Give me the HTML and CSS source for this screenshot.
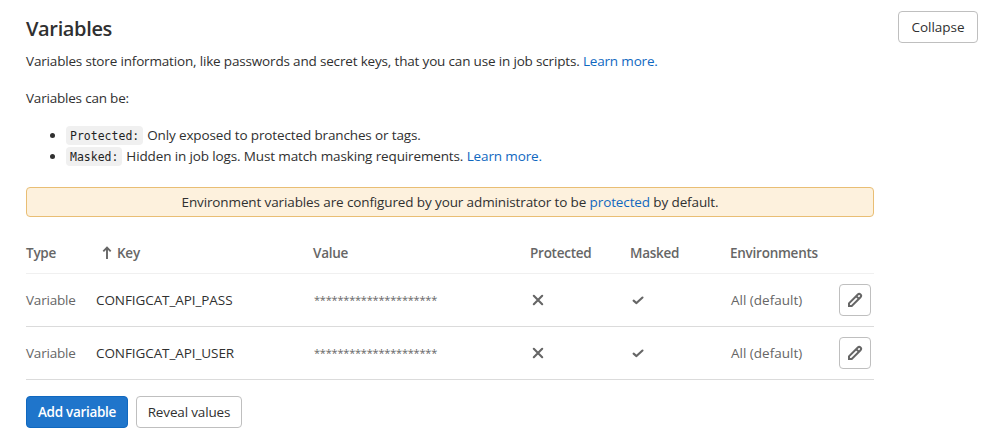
FILE: index.html
```html
<!DOCTYPE html>
<html lang="en">
<head>
<meta charset="utf-8">
<title>Variables</title>
<link rel="stylesheet" href="styles.css">
</head>
<body>
<svg class="sprite" aria-hidden="true">
  <symbol id="close" viewBox="0 0 16 16"><path d="M3.8 3.8l8.4 8.4M12.2 3.8l-8.4 8.4" fill="none" stroke="currentColor" stroke-width="2.1" stroke-linecap="round"/></symbol>
  <symbol id="check" viewBox="0 0 16 16"><path d="M3.6 8.6l2.9 2.5 6-5.6" fill="none" stroke="currentColor" stroke-width="2.1" stroke-linecap="round" stroke-linejoin="round"/></symbol>
  <symbol id="pencil" viewBox="0 0 16 16"><path d="M2 14v-2.7L10.8 2.5a1.9 1.9 0 0 1 2.7 2.7L4.7 14zM9.2 4.1l2.7 2.7" fill="none" stroke="currentColor" stroke-width="2"/><path d="M1 11.3L4.7 15H1z" fill="currentColor"/></symbol>
</svg>
<section class="settings">
  <div class="content">
    <h4 class="title">Variables</h4>
    <p class="intro">Variables store information, like passwords and secret keys, that you can use in job scripts. <a class="link">Learn more.</a></p>
    <p class="can-be">Variables can be:</p>
    <ul class="kinds">
      <li><code class="code">Protected:</code> <span class="kind-protected">Only exposed to protected branches or tags.</span></li>
      <li><code class="code">Masked:</code> <span class="kind-masked">Hidden in job logs. Must match masking requirements. <a class="link">Learn more.</a></span></li>
    </ul>
    <div class="alert"><span>Environment variables are configured by your administrator to be <a class="link">protected</a> by default.</span></div>
    <div class="table">
      <div class="row head">
        <span>Type</span>
        <span class="sorted"><svg class="arrow" viewBox="0 0 10 14"><path d="M5 13V2M1.3 5.4L5 1.7l3.7 3.7" fill="none" stroke="currentColor" stroke-width="1.9"/></svg>Key</span>
        <span>Value</span><span>Protected</span><span>Masked</span><span>Environments</span><span></span>
      </div>
      <div class="row">
        <span class="type">Variable</span><span class="key">CONFIGCAT_API_PASS</span><span class="mask">*********************</span>
        <svg class="icon"><use href="#close"/></svg><svg class="icon"><use href="#check"/></svg>
        <span class="env">All (default)</span><button class="btn edit" aria-label="Edit"><svg class="pencil"><use href="#pencil"/></svg></button>
      </div>
      <div class="row">
        <span class="type">Variable</span><span class="key">CONFIGCAT_API_USER</span><span class="mask">*********************</span>
        <svg class="icon"><use href="#close"/></svg><svg class="icon"><use href="#check"/></svg>
        <span class="env">All (default)</span><button class="btn edit" aria-label="Edit"><svg class="pencil"><use href="#pencil"/></svg></button>
      </div>
    </div>
    <div class="actions">
      <button class="btn add">Add variable</button>
      <button class="btn reveal">Reveal values</button>
    </div>
  </div>
  <button class="btn collapse">Collapse</button>
</section>
</body>
</html>
```
FILE: styles.css
```css
* { box-sizing: border-box; }
body { margin: 0; background: #fff; color: #303030; font: 13.5px/20px "Open Sans", "Noto Sans", sans-serif; white-space: nowrap; }
.sprite { display: none; }
.settings { display: flex; justify-content: space-between; align-items: flex-start; padding: 11px 24px 0 26px; }
.content { width: 848px; }
.title { margin: 6px 0 10px; font-size: 20px; line-height: 24px; font-weight: 600; letter-spacing: -0.35px; }
.link { color: #1068bf; }
.intro { margin: 0 0 17px; letter-spacing: -0.17px; }
.can-be { margin: 0 0 17px; letter-spacing: -0.2px; }
.kinds { margin: 0 0 20px; padding-left: 40px; line-height: 21px; }
.kinds li { height: 21px; letter-spacing: -0.13px; }
.code { display: inline-block; height: 19px; margin: 1px 0.5px 0 0; padding: 0 4px; border-radius: 4px; background: #f0f0f0; color: #1f1f1f; font: 11.5px/20px "DejaVu Sans Mono", monospace; letter-spacing: 0; vertical-align: top; }
.alert { display: flex; justify-content: center; align-items: center; height: 30px; background: #fdf1dd; border: 1px solid #e9be74; border-radius: 4px; letter-spacing: -0.12px; }
.table { margin-top: 17px; color: #666; }
.row { display: grid; grid-template-columns: 70px 217px 217px 100px 100px 109px 35px; align-items: center; height: 53px; border-bottom: 1px solid #dbdbdb; }
.head { height: 40px; padding-bottom: 2px; border-bottom-color: #f0f0f0; font-weight: 600; letter-spacing: -0.25px; }
.sorted { display: flex; align-items: center; gap: 5px; padding-left: 6px; }
.arrow { width: 10px; height: 14px; }
.type { letter-spacing: -0.2px; }
.key { color: #303030; letter-spacing: -0.08px; }
.mask { font-size: 11px; letter-spacing: -0.2px; padding-left: 1px; }
.env { padding-left: 1px; }
.icon { width: 16px; height: 16px; }
.btn { height: 32px; padding: 0; border: 1px solid #bfbfbf; border-radius: 4px; background: #fff; color: #303030; font: inherit; white-space: nowrap; }
.edit { display: flex; align-items: center; justify-content: center; width: 32px; color: #666; }
.pencil { width: 16px; height: 16px; }
.actions { display: flex; gap: 8px; margin-top: 16px; }
.add { width: 102px; background: #1f75cb; border-color: #1068bf; color: #fff; font-weight: 600; letter-spacing: -0.3px; }
.reveal { width: 106px; letter-spacing: -0.15px; }
.collapse { width: 80px; }
```
